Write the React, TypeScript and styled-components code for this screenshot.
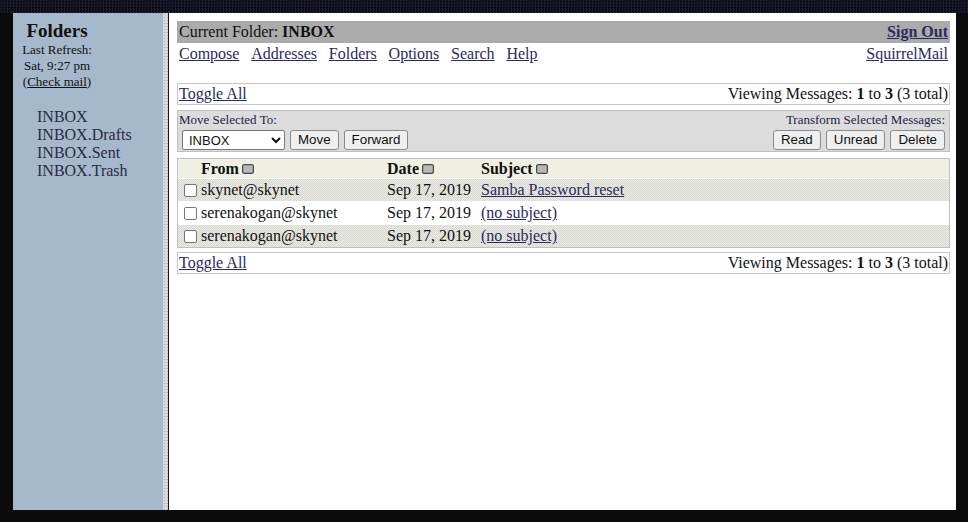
import React from "react";
import styled, { createGlobalStyle } from "styled-components";

const Global = createGlobalStyle`
  html, body { margin: 0; padding: 0; background: #0b0b0b; }
  body { font-family: "Liberation Serif", "Times New Roman", serif; color: #111; }
`;

const Screen = styled.div`
  width: 968px;
  height: 522px;
  background: #0b0b0b;
  display: flex;
  flex-direction: column;
  overflow: hidden;
`;

const TopBand = styled.div`
  height: 13px;
  flex: none;
  background-color: #0a0a10;
  background-image: repeating-conic-gradient(#1b1b33 0 25%, #08080a 0 50%);
  background-size: 3px 3px;
`;

const Middle = styled.div`
  display: flex;
  height: 497px;
  padding: 0 12px 0 13px;
`;

const Window = styled.div`
  flex: 1;
  display: flex;
  background: #fff;
`;

const LeftPane = styled.div`
  width: 150px;
  background: #a5b8cc;
  flex: none;
`;

const Divider = styled.div`
  width: 5px;
  flex: none;
  background-color: #d8d8d8;
  background-image: radial-gradient(#b0b0b0 0.6px, transparent 0.8px);
  background-size: 3px 3px;
  border-right: 1px solid #1a1a1a;
`;

const FolderHead = styled.div`
  width: 88px;
  text-align: center;
  padding-top: 8px;
`;

const FolderTitle = styled.div`
  font-weight: bold;
  font-size: 19px;
  line-height: 20px;
  margin-bottom: 1px;
`;

const Small = styled.div`
  font-size: 13px;
  line-height: 16px;
`;

const Link = styled.a<{ $bold?: boolean; $plain?: boolean }>`
  color: ${(p) => (p.$plain ? "#111" : "#2a2a5e")};
  text-decoration: underline;
  font-weight: ${(p) => (p.$bold ? "bold" : "normal")};
  cursor: pointer;
`;

const FolderList = styled.div`
  padding: 18px 0 0 24px;
  display: flex;
  flex-direction: column;
`;

const FolderItem = styled.div`
  font-size: 16px;
  line-height: 18px;
  color: #2a2a44;
`;

const Main = styled.div`
  flex: 1;
  padding: 8px 6px 8px 8px;
  display: flex;
  flex-direction: column;
  font-size: 16px;
`;

const TitleBar = styled.div`
  background: #ababab;
  height: 22px;
  display: flex;
  align-items: center;
  justify-content: space-between;
  padding: 0 2px;
  line-height: 22px;
`;

const NavRow = styled.div`
  height: 22px;
  display: flex;
  align-items: center;
  justify-content: space-between;
  padding: 0 2px;
`;

const NavLinks = styled.div`
  display: flex;
  gap: 11.8px;
`;

const Spacer = styled.div<{ $h: number }>`
  height: ${(p) => p.$h}px;
  flex: none;
`;

const InfoBox = styled.div`
  height: 20px;
  border: 1px solid #c8c8c8;
  display: flex;
  align-items: center;
  justify-content: space-between;
  padding: 0 1px;
`;

const ActionBox = styled.div`
  height: 40px;
  border: 1px solid #c0c0c0;
  background: #dcdcdc;
  display: flex;
  justify-content: space-between;
  padding: 0 4px 0 1px;
`;

const ActionGroup = styled.div<{ $right?: boolean }>`
  display: flex;
  flex-direction: column;
  align-items: ${(p) => (p.$right ? "flex-end" : "flex-start")};
`;

const ActionLabel = styled.div`
  font-size: 13px;
  line-height: 16px;
  padding-top: 1px;
  color: #222244;
`;

const Controls = styled.div`
  display: flex;
  gap: 5px;
  padding-left: 3px;
  margin-top: 2px;
`;

const Select = styled.select`
  width: 103px;
  height: 20px;
  font-family: "Liberation Sans", Arial, sans-serif;
  font-size: 13px;
  border: 1px solid #767676;
  border-radius: 2px;
  background: #fff;
  color: #111;
  padding: 0 0 0 2px;
`;

const Btn = styled.button`
  height: 20px;
  font-family: "Liberation Sans", Arial, sans-serif;
  font-size: 13.33px;
  border: 1px solid #8a8a8a;
  border-radius: 3px;
  background: #efefef;
  color: #111;
  padding: 0 7px;
  line-height: 18px;
`;

const MsgTable = styled.div`
  border: 1px solid #c0c0c0;
  display: flex;
  flex-direction: column;
  gap: 1px;
  background: #fff;
`;

const MsgRow = styled.div<{ $variant: "head" | "shade" | "plain" }>`
  display: grid;
  grid-template-columns: 23px 186px 94px 1fr;
  height: ${(p) => (p.$variant === "head" ? 19 : 22)}px;
  align-items: center;
  background-color: ${(p) =>
    p.$variant === "head" ? "#f0f0e2" : p.$variant === "shade" ? "#e4e4dc" : "#fff"};
  background-image: ${(p) =>
    p.$variant === "shade"
      ? "repeating-conic-gradient(#d8d8d0 0 25%, #ececE6 0 50%)"
      : "none"};
  background-size: 2px 2px;
  font-weight: ${(p) => (p.$variant === "head" ? "bold" : "normal")};
  white-space: nowrap;
`;

const CheckCell = styled.div`
  display: flex;
  justify-content: center;
  padding-left: 1px;
`;

const Check = styled.span`
  width: 11px;
  height: 11px;
  border: 1px solid #767676;
  border-radius: 2px;
  background: #fff;
  display: inline-block;
`;

const HeadCell = styled.div`
  display: flex;
  align-items: center;
  gap: 3px;
`;

const SortIcon = () => (
  <svg width="12" height="10" viewBox="0 0 12 10">
    <rect x="0.5" y="0.5" width="11" height="9" rx="1.5" fill="#9a9a9a" stroke="#4a4a4a" />
    <rect x="2" y="2" width="8" height="6" fill="#b8b8b8" />
  </svg>
);

const msgs = [
  { from: "skynet@skynet", date: "Sep 17, 2019", subject: "Samba Password reset" },
  { from: "serenakogan@skynet", date: "Sep 17, 2019", subject: "(no subject)" },
  { from: "serenakogan@skynet", date: "Sep 17, 2019", subject: "(no subject)" },
];

const Viewing = () => (
  <span>
    Viewing Messages: <b>1</b> to <b>3</b> (3 total)
  </span>
);

export default function App() {
  return (
    <>
      <Global />
      <Screen>
        <TopBand />
        <Middle>
          <Window>
            <LeftPane>
              <FolderHead>
                <FolderTitle>Folders</FolderTitle>
                <Small>Last Refresh:</Small>
                <Small>Sat, 9:27 pm</Small>
                <Small>
                  (<Link $plain>Check mail</Link>)
                </Small>
              </FolderHead>
              <FolderList>
                <FolderItem>INBOX</FolderItem>
                <FolderItem>INBOX.Drafts</FolderItem>
                <FolderItem>INBOX.Sent</FolderItem>
                <FolderItem>INBOX.Trash</FolderItem>
              </FolderList>
            </LeftPane>
            <Divider />
            <Main>
              <TitleBar>
                <span>
                  Current Folder: <b>INBOX</b>
                </span>
                <Link $bold>Sign Out</Link>
              </TitleBar>
              <NavRow>
                <NavLinks>
                  <Link>Compose</Link>
                  <Link>Addresses</Link>
                  <Link>Folders</Link>
                  <Link>Options</Link>
                  <Link>Search</Link>
                  <Link>Help</Link>
                </NavLinks>
                <Link>SquirrelMail</Link>
              </NavRow>
              <Spacer $h={18} />
              <InfoBox>
                <Link>Toggle All</Link>
                <Viewing />
              </InfoBox>
              <Spacer $h={5} />
              <ActionBox>
                <ActionGroup>
                  <ActionLabel>Move Selected To:</ActionLabel>
                  <Controls>
                    <Select defaultValue="INBOX">
                      <option>INBOX</option>
                      <option>INBOX.Drafts</option>
                      <option>INBOX.Sent</option>
                      <option>INBOX.Trash</option>
                    </Select>
                    <Btn>Move</Btn>
                    <Btn>Forward</Btn>
                  </Controls>
                </ActionGroup>
                <ActionGroup $right>
                  <ActionLabel>Transform Selected Messages:</ActionLabel>
                  <Controls>
                    <Btn>Read</Btn>
                    <Btn>Unread</Btn>
                    <Btn>Delete</Btn>
                  </Controls>
                </ActionGroup>
              </ActionBox>
              <Spacer $h={6} />
              <MsgTable>
                <MsgRow $variant="head">
                  <div />
                  <HeadCell>
                    From <SortIcon />
                  </HeadCell>
                  <HeadCell>
                    Date <SortIcon />
                  </HeadCell>
                  <HeadCell>
                    Subject <SortIcon />
                  </HeadCell>
                </MsgRow>
                {msgs.map((m, i) => (
                  <MsgRow key={i} $variant={i % 2 === 0 ? "shade" : "plain"}>
                    <CheckCell>
                      <Check />
                    </CheckCell>
                    <div>{m.from}</div>
                    <div>{m.date}</div>
                    <div>
                      <Link>{m.subject}</Link>
                    </div>
                  </MsgRow>
                ))}
              </MsgTable>
              <Spacer $h={4} />
              <InfoBox>
                <Link>Toggle All</Link>
                <Viewing />
              </InfoBox>
            </Main>
          </Window>
        </Middle>
      </Screen>
    </>
  );
}
